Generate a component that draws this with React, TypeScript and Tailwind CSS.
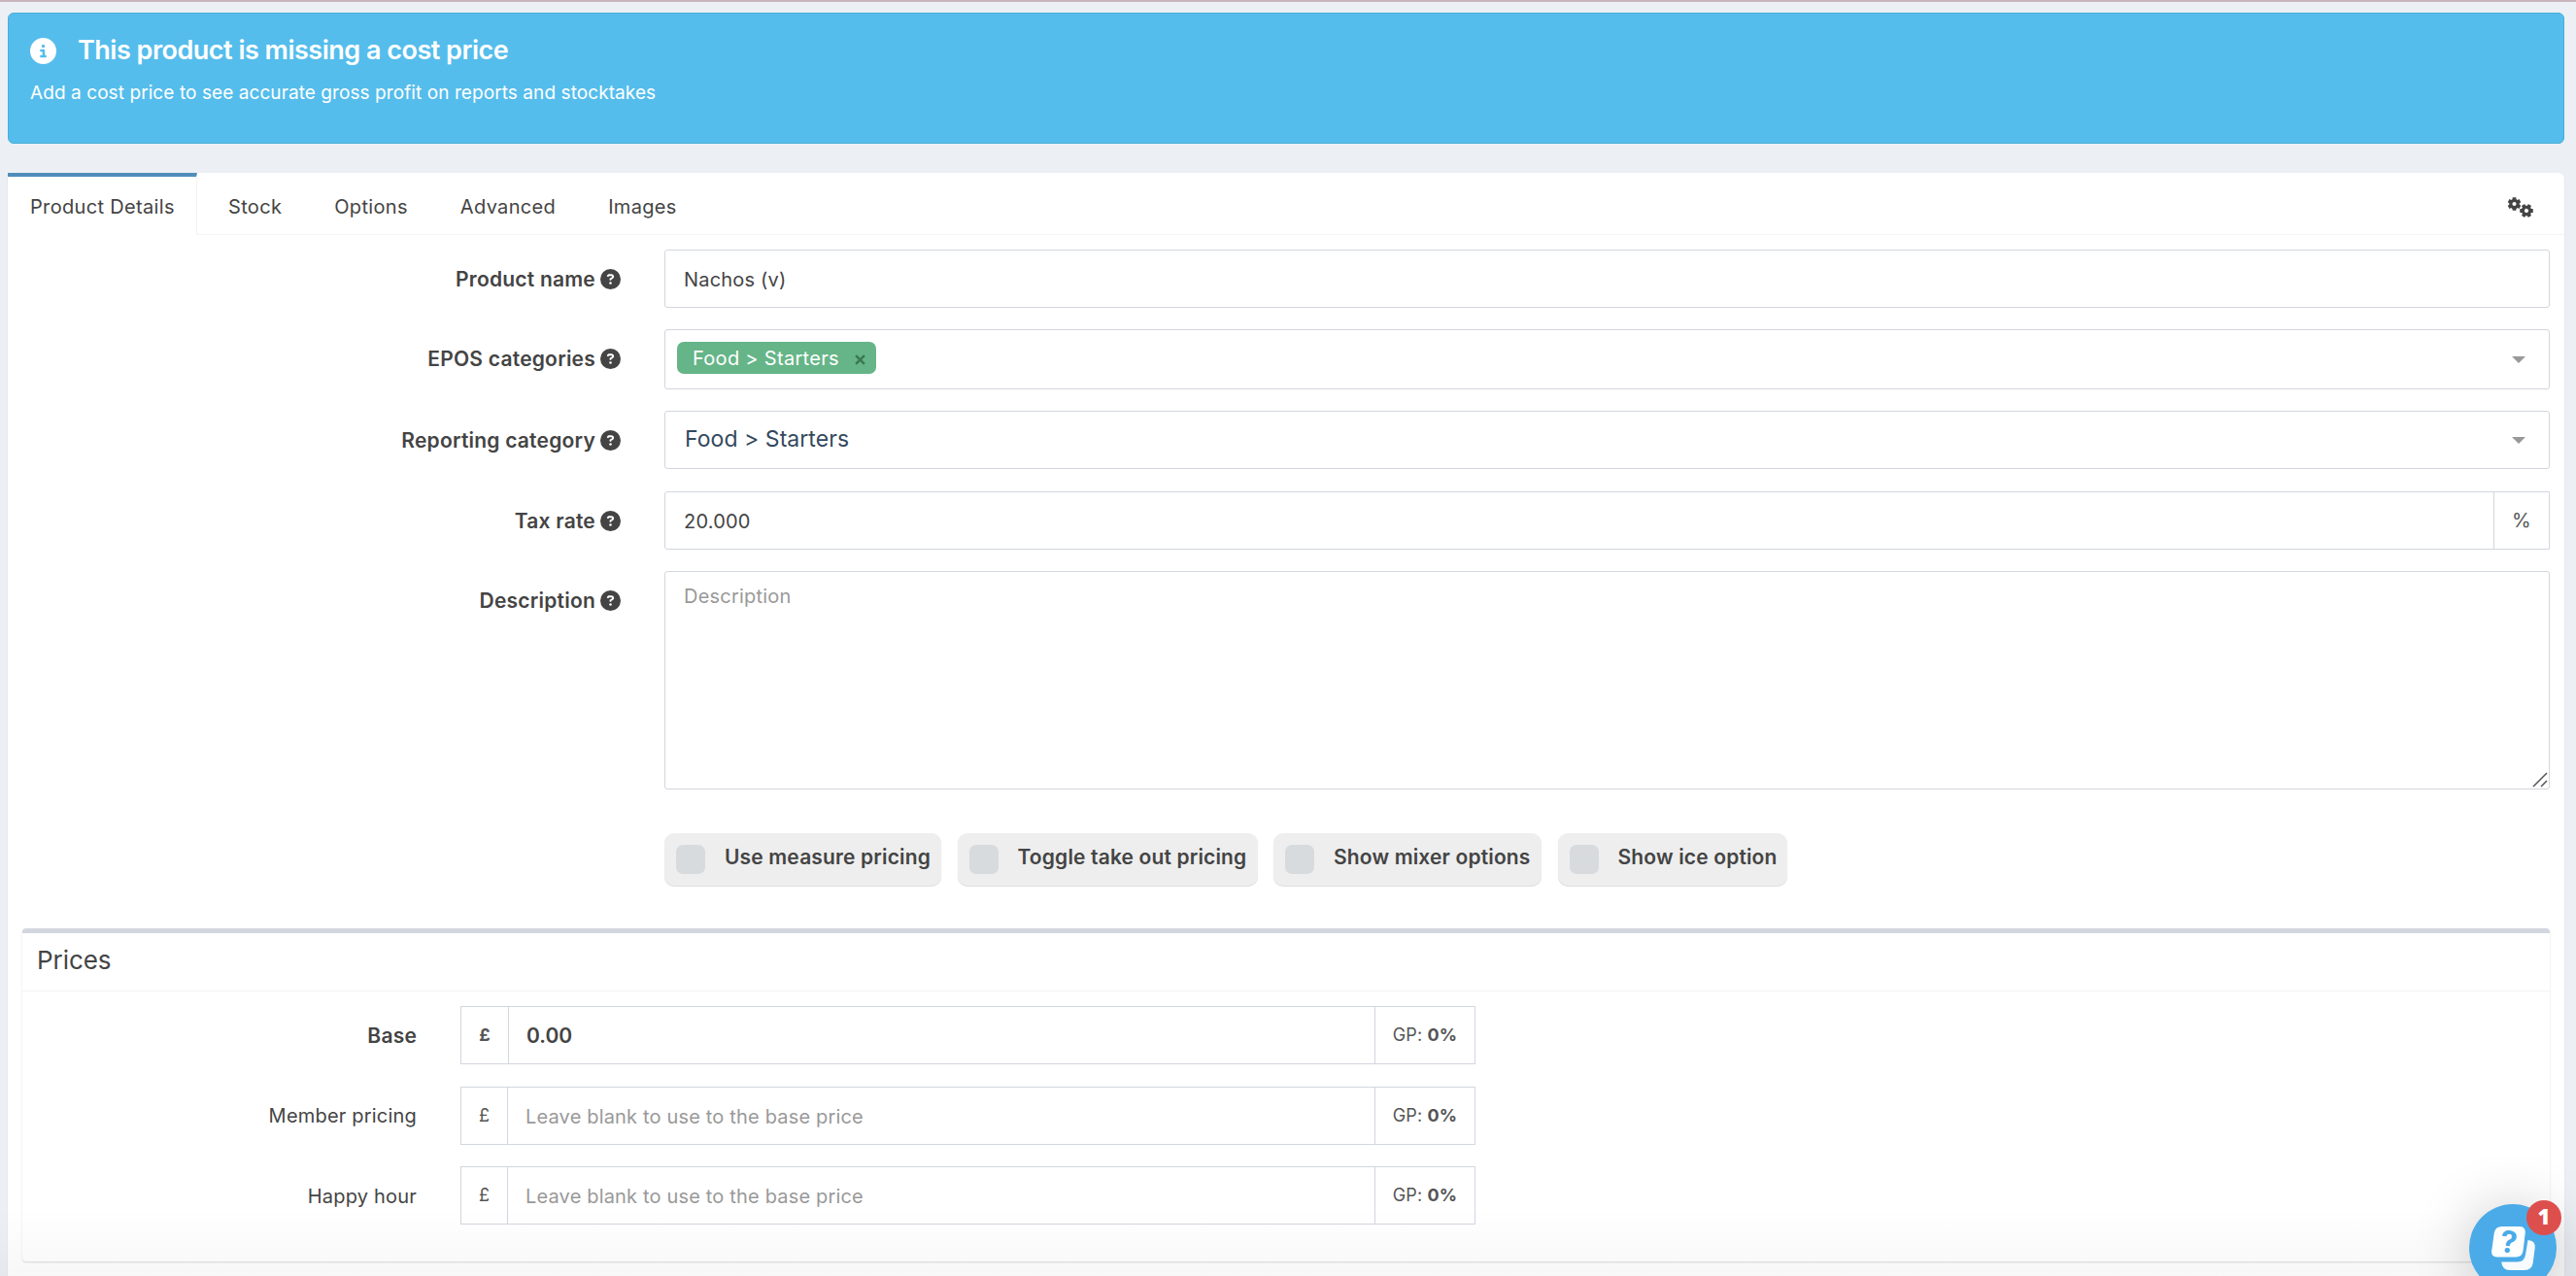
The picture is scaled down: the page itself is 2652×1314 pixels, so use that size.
import type { ReactNode } from "react";
import { FaCircleInfo, FaCircleQuestion } from "react-icons/fa6";
import { clsx } from "clsx";

const tabs = ["Product Details", "Stock", "Options", "Advanced", "Images"];

const toggles = [
  { label: "Use measure pricing", width: "w-[285px]" },
  { label: "Toggle take out pricing", width: "w-[309px]" },
  { label: "Show mixer options", width: "w-[276px]" },
  { label: "Show ice option", width: "w-[236px]" },
];

const prices = [
  { label: "Base", value: "0.00", primary: true },
  { label: "Member pricing", value: "", primary: false },
  { label: "Happy hour", value: "", primary: false },
];

export default function App() {
  return (
    <div className="relative h-[1314px] w-[2652px] overflow-hidden border-t-2 border-[#c9b6bd] bg-[#ecf0f5] font-[Inter,sans-serif] text-[20px] leading-[28px] tracking-[0.2px] text-[#444]">
      <CostPriceAlert />
      <div className="mx-2 mt-[30px] mr-3 h-[1180px] rounded-t-[6px] bg-white shadow-[0_1px_2px_rgba(0,0,0,0.1)]">
        <TabBar />
        <ProductForm />
        <PricesBox />
      </div>
      <div className="pointer-events-none absolute inset-x-0 bottom-0 h-[70px] bg-linear-to-b from-transparent to-black/[0.03]" />
      <HelpWidget />
    </div>
  );
}

function CostPriceAlert() {
  return (
    <div className="mt-[11px] mr-3 ml-2 h-[135px] rounded-[6px] border border-[#4aaed8] bg-[#55bdec] pt-[22px] pl-[22px] text-white">
      <div className="flex h-[32px] items-center">
        <FaCircleInfo className="size-[27px]" />
        <h4 className="ml-[22px] text-[27px] leading-[32px] font-semibold tracking-[-0.5px]">
          This product is missing a cost price
        </h4>
      </div>
      <p className="mt-[15px] text-[19px] leading-[26px] tracking-[0.08px]">
        Add a cost price to see accurate gross profit on reports and stocktakes
      </p>
    </div>
  );
}

function TabBar() {
  return (
    <div className="flex h-[64px] border-b border-[#f4f4f4] tracking-[0.33px]">
      {tabs.map((tab, i) => (
        <div
          key={tab}
          className={clsx(
            "flex h-[64px] items-center px-[23px]",
            i === 0
              ? "mr-[9px] w-[195px] border-t-4 border-r border-t-[#4f8ebb] border-r-[#f4f4f4] bg-white pt-[2px] whitespace-nowrap"
              : "mr-[8px] pt-[6px]",
          )}
        >
          {tab}
        </div>
      ))}
      <Cogs />
    </div>
  );
}

function Cogs() {
  return (
    <svg viewBox="0 0 28 22" className="mt-[24px] mr-[31px] ml-auto h-[22px] w-[28px]">
      <Cog x={7.5} y={8} turn={0} />
      <Cog x={20} y={15} turn={30} />
    </svg>
  );
}

function Cog({ x, y, turn }: { x: number; y: number; turn: number }) {
  return (
    <g transform={`translate(${x} ${y}) rotate(${turn})`}>
      <circle r="3.7" fill="none" stroke="#444" strokeWidth="3.2" />
      {[0, 60, 120, 180, 240, 300].map((angle) => (
        <rect
          key={angle}
          x="-1.9"
          y="-6.8"
          width="3.8"
          height="3"
          rx="0.4"
          fill="#444"
          transform={`rotate(${angle})`}
        />
      ))}
    </g>
  );
}

function FormRow({ label, children }: { label: string; children: ReactNode }) {
  return (
    <div className="flex">
      <div className="mr-[45px] flex h-[61px] w-[631px] shrink-0 items-center justify-end gap-[5px] text-[21px] font-semibold tracking-[0.22px]">
        {label}
        <FaCircleQuestion className="mb-px size-[21px]" />
      </div>
      <div className="min-w-0 flex-1">{children}</div>
    </div>
  );
}

function Caret() {
  return (
    <span className="mr-[24px] ml-auto border-x-[7px] border-t-[7px] border-x-transparent border-t-[#999]" />
  );
}

function ProductForm() {
  return (
    <div className="mt-[15px] mr-[15px] flex flex-col">
      <FormRow label="Product name">
        <div className="flex h-[60px] items-center rounded-[3px] border border-[#d2d6de] px-[19px] pt-px">
          Nachos (v)
        </div>
      </FormRow>
      <div className="mt-[21px]">
        <FormRow label="EPOS categories">
          <div className="flex h-[62px] items-center rounded-[3px] border border-[#d2d6de]">
            <span className="mb-[3px] ml-[12px] flex h-[33px] w-[205px] items-center rounded-[7px] bg-[#65b588] pl-[16px] tracking-[0.3px] whitespace-nowrap text-white">
              Food &gt; Starters
              <svg viewBox="0 0 10 10" className="mt-[3px] mr-[11px] ml-auto size-[11px]">
                <path d="M1 1 9 9M9 1 1 9" stroke="#3b7753" strokeWidth="2.2" />
              </svg>
            </span>
            <Caret />
          </div>
        </FormRow>
      </div>
      <div className="mt-[22px]">
        <FormRow label="Reporting category">
          <div className="flex h-[60px] items-center rounded-[3px] border border-[#d2d6de] pl-[20px] text-[23px] tracking-[0.05px] text-[#34495e]">
            <span className="mb-[2px]">Food &gt; Starters</span>
            <Caret />
          </div>
        </FormRow>
      </div>
      <div className="mt-[22px]">
        <FormRow label="Tax rate">
          <div className="flex h-[60px] items-center rounded-l-[3px] border border-[#d2d6de] pl-[19px]">
            <span className="pt-px">20.000</span>
            <span className="ml-auto flex h-full w-[57px] items-center justify-center border-l border-[#d2d6de] text-[#555]">
              %
            </span>
          </div>
        </FormRow>
      </div>
      <div className="mt-[21px]">
        <FormRow label="Description">
          <div className="flex h-[225px] items-start justify-between rounded-[3px] border border-[#d2d6de] pt-[11px] pl-[19px] text-[#999]">
            Description
            <svg viewBox="0 0 16 16" className="mr-px mb-px size-[16px] self-end">
              <path d="M1 15 15 1M9 15 15 9" stroke="#555" strokeWidth="1.5" />
            </svg>
          </div>
        </FormRow>
      </div>
      <div className="mt-[45px] ml-[676px] flex gap-[16.5px]">
        {toggles.map((toggle) => (
          <div
            key={toggle.label}
            className={clsx(
              "flex h-[54px] items-center rounded-[10px] bg-[#eee] pl-[12px] shadow-[0_1px_1px_rgba(0,0,0,0.14)]",
              toggle.width,
            )}
          >
            <span className="size-[30px] rounded-[7px] bg-[#d7dbde]" />
            <span className="mb-[4px] ml-[20px] text-[21px] font-semibold tracking-[0.15px] whitespace-nowrap">
              {toggle.label}
            </span>
          </div>
        ))}
      </div>
    </div>
  );
}

function PricesBox() {
  return (
    <div className="mt-[44px] mr-[15px] ml-[15px] h-[343px] rounded-[4px] border-t-[5px] border-[#d2d6de] bg-white shadow-[0_1px_2px_rgba(0,0,0,0.15)]">
      <h3 className="h-[60px] border-b border-[#f4f4f4] pt-[11px] pl-[15px] text-[26px] leading-[34px] tracking-[-0.05px]">
        Prices
      </h3>
      <div className="flex flex-col gap-[22.5px] pt-[15px]">
        {prices.map((price) => (
          <PriceRow key={price.label} {...price} />
        ))}
      </div>
    </div>
  );
}

function PriceRow({ label, value, primary }: { label: string; value: string; primary: boolean }) {
  return (
    <div className="flex items-center">
      <div className={clsx("mr-[45px] w-[406px] pt-px text-right", primary && "text-[21px] font-semibold")}>
        {label}
      </div>
      <div className="flex h-[60px] w-[1045px] items-center border border-[#d2d6de]">
        <span
          className={clsx(
            "flex h-full items-center justify-center border-r border-[#d2d6de] text-[18px] text-[#555]",
            primary ? "w-[49px] font-bold" : "w-[48px]",
          )}
        >
          £
        </span>
        <span
          className={clsx(
            "pt-[2px] pl-[18px]",
            primary ? "text-[21px] font-semibold tracking-normal" : "tracking-[0.17px] text-[#999]",
          )}
        >
          {value || "Leave blank to use to the base price"}
        </span>
        <span className="ml-auto flex h-full w-[103px] items-center justify-center gap-[5px] border-l border-[#d2d6de] text-[18px] text-[#555]">
          GP: <b className="font-bold">0%</b>
        </span>
      </div>
    </div>
  );
}

function HelpWidget() {
  return (
    <div className="absolute top-[1238px] left-[2542px] size-[90px] rounded-full bg-[#4aabe8] shadow-[0_4px_60px_rgba(0,0,0,0.22)]">
      <svg viewBox="0 0 90 90" className="size-[90px]">
        <path
          d="M34 23H51.500Q58.500 23 57.700 30L55.500 48Q54.600 54.500 48 54.500H29.500Q22.500 54.500 23.200 48L25.700 30Q26.700 23 34 23Z"
          fill="#fff"
        />
        <path
          d="M60.500 37Q68.500 37.500 67.700 45L65.700 60.500Q64.600 68 57 68H42Q34 68 33.200 59.500H49.500Q57 59.500 58 52Z"
          fill="#f7fbfe"
        />
        <text
          x="41"
          y="50"
          textAnchor="middle"
          fontFamily="Inter"
          fontSize="31"
          fontWeight="700"
          fill="#4aabe8"
          transform="rotate(6 41 39)"
        >
          ?
        </text>
      </svg>
      <span className="absolute top-[-4px] left-[59px] flex size-[36px] items-center justify-center rounded-full bg-[#dd4f4d] pb-[4px] font-['Open_Sans'] text-[22px] font-extrabold text-white">
        1
      </span>
    </div>
  );
}
